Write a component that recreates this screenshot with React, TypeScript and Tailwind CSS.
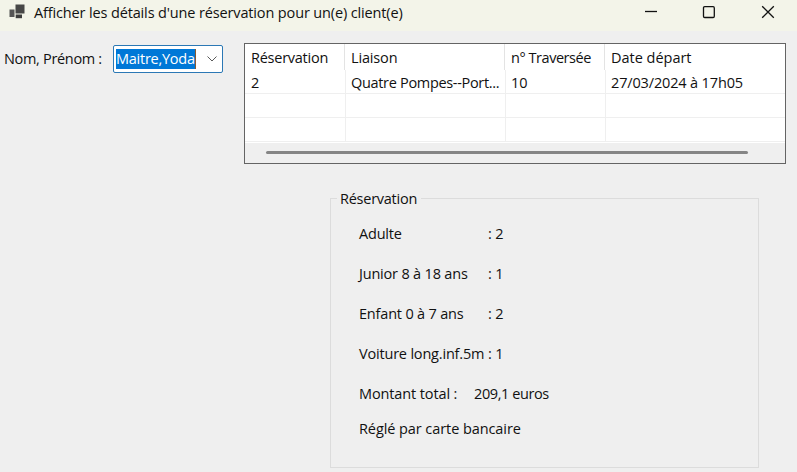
const columns = [
  { title: 'Réservation', value: '2', width: 'w-[100px]', titleTracking: 'tracking-[-0.25px]', valueTracking: '' },
  { title: 'Liaison', value: 'Quatre Pompes--Port...', width: 'w-[160px]', titleTracking: 'tracking-[-0.15px]', valueTracking: 'tracking-[-0.32px]' },
  { title: 'n° Traversée', value: '10', width: 'w-[100px]', titleTracking: 'tracking-[-0.45px]', valueTracking: '' },
  { title: 'Date départ', value: '27/03/2024 à 17h05', width: 'w-[180px]', titleTracking: 'tracking-[-0.02px]', valueTracking: 'tracking-[-0.15px]' },
];

const lines = [
  { label: 'Adulte', count: '2' },
  { label: 'Junior 8 à 18 ans', count: '1' },
  { label: 'Enfant 0 à 7 ans', count: '2' },
  { label: 'Voiture long.inf.5m', count: '1' },
];

function TitleBar() {
  return (
    <header className="flex h-[31px] items-start bg-[#f3f4e9]">
      <svg className="ml-[9px] mt-[4px]" width="16" height="15" viewBox="0 0 16 15">
        <rect x="6.5" y="0.5" width="9" height="9" fill="#474747" />
        <rect x="0.5" y="5.5" width="5" height="7.5" fill="#555555" />
        <rect x="6.7" y="10.5" width="6.3" height="3.7" fill="#3d3d3d" />
      </svg>
      <h1 className="ml-[9px] mt-[3px] flex-1 leading-5 tracking-[-0.14px]">Afficher les détails d'une réservation pour un(e) client(e)</h1>
      <svg className="mr-[22px] mt-[5px]" width="130" height="15" viewBox="0 0 130 15" fill="none" stroke="#111" strokeWidth="1.3">
        <path d="M0 6.5H12" />
        <rect x="58.5" y="1.7" width="10.8" height="10.8" rx="1.2" />
        <path d="M117.2 1.2L128.8 12.8M128.8 1.2L117.2 12.8" />
      </svg>
    </header>
  );
}

function ReservationTable() {
  return (
    <div className="ml-[21px] mt-[12px] h-[121px] w-[542px] overflow-hidden border border-[#646464] bg-white">
      <div className="flex h-[26px]">
        {columns.map((c, i) => (
          <div key={c.title} className={`shrink-0 whitespace-nowrap pl-[6px] pt-[4px] leading-5 ${i < 3 ? 'border-r border-[#e3e3e3]' : ''} ${c.width} ${c.titleTracking}`}>
            {c.title}
          </div>
        ))}
      </div>
      {[0, 1, 2].map((row) => (
        <div key={row} className="flex h-[24px] border-b border-[#efefef] pl-px">
          {columns.map((c, i) => (
            <div key={c.title} className={`shrink-0 whitespace-nowrap pl-[5px] pt-[3px] leading-5 ${i < 3 ? 'border-r border-[#efefef]' : ''} ${c.width} ${c.valueTracking}`}>
              {row === 0 ? c.value : ''}
            </div>
          ))}
        </div>
      ))}
      <div className="mt-px flex h-[20px] items-start bg-[#efefef] pl-[21px] pt-[8px]">
        <div className="h-[3px] w-[482px] rounded-full bg-[#858585]" />
      </div>
    </div>
  );
}

export default function App() {
  return (
    <div className="h-[472px] w-[797px] overflow-hidden bg-[#efefef] text-[14.5px] text-[#111] [font-family:'Open_Sans','Noto_Sans',sans-serif]">
      <TitleBar />
      <div className="flex items-start">
        <label className="ml-[4px] mt-[18px] w-[109px] whitespace-nowrap leading-5 tracking-[-0.32px]">Nom, Prénom :</label>
        <div className="mt-[14px] flex h-[28px] w-[110px] items-center rounded-[2px] border border-[#2b78b5] bg-white pl-[2px]">
          <span className="h-[20px] w-[80px] whitespace-nowrap border-r border-[#8a5a30] bg-[#0078d7] leading-5 tracking-[-0.25px] text-white">Maitre,Yoda</span>
          <svg className="ml-[11px]" width="10" height="6" viewBox="0 0 10 6" fill="none" stroke="#5a5a5a">
            <path d="M0.5 0.5L5 5L9.5 0.5" />
          </svg>
        </div>
        <ReservationTable />
      </div>
      <fieldset className="ml-[330px] mt-[25px] h-[279px] w-[429px] border border-[#dcdcdc] pl-[28px]">
        <legend className="-ml-[22px] h-[19px] w-[84px] whitespace-nowrap pl-[3px] leading-[19px] tracking-[-0.25px]">Réservation</legend>
        <div className="mt-[16px]">
          {lines.map((l) => (
            <div key={l.label} className="flex h-[40px] leading-5 tracking-[-0.19px]">
              <span className="w-[129px] whitespace-nowrap">{l.label}</span>
              <span>: {l.count}</span>
            </div>
          ))}
          <div className="flex h-[35px] leading-5">
            <span className="w-[115px] tracking-[-0.12px]">Montant total :</span>
            <span className="tracking-[-0.4px]">209,1 euros</span>
          </div>
          <p className="leading-5 tracking-[-0.08px]">Réglé par carte bancaire</p>
        </div>
      </fieldset>
    </div>
  );
}
